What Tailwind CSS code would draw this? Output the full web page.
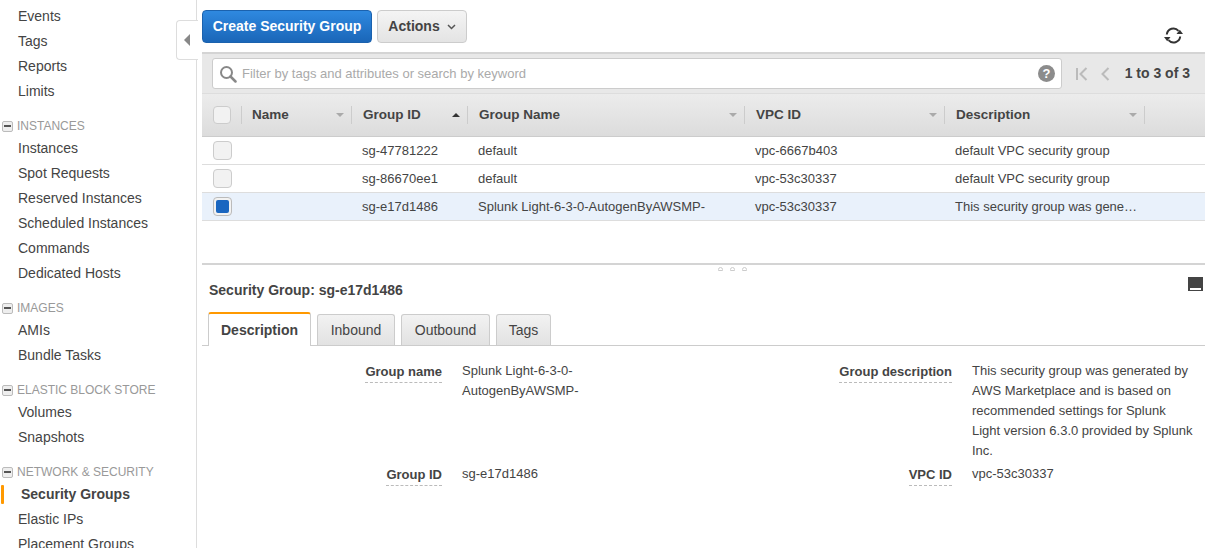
<!DOCTYPE html>
<html lang="en">
<head>
  <meta charset="UTF-8" />
  <title>Security Groups</title>
  <script src="https://cdn.jsdelivr.net/npm/@tailwindcss/browser@4"></script>
</head>
<body class="bg-white text-[#444] text-[13px] font-['Liberation_Sans',Arial,sans-serif] overflow-hidden">
<div class="relative flex h-[548px] w-[1205px] overflow-hidden">

  <!-- Sidebar -->
  <nav class="w-[197px] shrink-0 h-full border-r border-[#ddd] pt-[4px] text-[14px] overflow-hidden">
    <a class="flex items-center h-[25px] pl-[18px]">Events</a>
    <a class="flex items-center h-[25px] pl-[18px]">Tags</a>
    <a class="flex items-center h-[25px] pl-[18px]">Reports</a>
    <a class="flex items-center h-[25px] pl-[18px]">Limits</a>

    <div class="flex items-center h-[20px] mt-[12px] text-[12px] text-[#999]">
      <span class="ml-[2px] mr-[4px] w-[11px] h-[11px] flex items-center justify-center border border-[#bbb] rounded-[2px] bg-[#eee]"><span class="w-[7px] h-[2px] bg-[#555]"></span></span>INSTANCES
    </div>
    <a class="flex items-center h-[25px] pl-[18px]">Instances</a>
    <a class="flex items-center h-[25px] pl-[18px]">Spot Requests</a>
    <a class="flex items-center h-[25px] pl-[18px]">Reserved Instances</a>
    <a class="flex items-center h-[25px] pl-[18px]">Scheduled Instances</a>
    <a class="flex items-center h-[25px] pl-[18px]">Commands</a>
    <a class="flex items-center h-[25px] pl-[18px]">Dedicated Hosts</a>

    <div class="flex items-center h-[20px] mt-[12px] text-[12px] text-[#999]">
      <span class="ml-[2px] mr-[4px] w-[11px] h-[11px] flex items-center justify-center border border-[#bbb] rounded-[2px] bg-[#eee]"><span class="w-[7px] h-[2px] bg-[#555]"></span></span>IMAGES
    </div>
    <a class="flex items-center h-[25px] pl-[18px]">AMIs</a>
    <a class="flex items-center h-[25px] pl-[18px]">Bundle Tasks</a>

    <div class="flex items-center h-[20px] mt-[12px] text-[12px] text-[#999]">
      <span class="ml-[2px] mr-[4px] w-[11px] h-[11px] flex items-center justify-center border border-[#bbb] rounded-[2px] bg-[#eee]"><span class="w-[7px] h-[2px] bg-[#555]"></span></span>ELASTIC BLOCK STORE
    </div>
    <a class="flex items-center h-[25px] pl-[18px]">Volumes</a>
    <a class="flex items-center h-[25px] pl-[18px]">Snapshots</a>

    <div class="flex items-center h-[20px] mt-[12px] text-[12px] text-[#999]">
      <span class="ml-[2px] mr-[4px] w-[11px] h-[11px] flex items-center justify-center border border-[#bbb] rounded-[2px] bg-[#eee]"><span class="w-[7px] h-[2px] bg-[#555]"></span></span>NETWORK &amp; SECURITY
    </div>
    <a class="flex items-center h-[25px] pl-[1px] font-bold">
      <span class="w-[3px] h-[19px] bg-[#f90] rounded-[1px] mr-[17px]"></span>Security Groups
    </a>
    <a class="flex items-center h-[25px] pl-[18px]">Elastic IPs</a>
    <a class="flex items-center h-[25px] pl-[18px]">Placement Groups</a>
  </nav>

  <!-- Collapse tab -->
  <div class="absolute left-[176px] top-[20px] w-[22px] h-[40px] bg-white border border-r-0 border-[#ddd] rounded-l-[4px] flex items-center pl-[7px]">
    <span class="w-0 h-0 border-y-[6px] border-y-transparent border-r-[6px] border-r-[#888]"></span>
  </div>

  <!-- Main -->
  <main class="flex-1 min-w-0 pl-[5px] flex flex-col">
    <!-- Toolbar -->
    <div class="h-[52px] pt-[10px] flex items-start gap-[5px]">
      <button class="h-[33px] w-[170px] rounded-[4px] border border-[#1b62ae] bg-linear-to-b from-[#2f89e0] to-[#1a66b8] text-white font-bold text-[14px]">Create Security Group</button>
      <button class="h-[33px] w-[90px] rounded-[4px] border border-[#ccc] bg-linear-to-b from-[#f4f4f4] to-[#e4e4e4] font-bold text-[14px] flex items-center justify-center gap-[7px]">
        Actions
        <svg width="9" height="6" viewBox="0 0 9 6"><path d="M1 1l3.500 3.500L8 1" fill="none" stroke="#555" stroke-width="1.500"/></svg>
      </button>
      <svg class="ml-auto mr-[21px] mt-[16px]" width="21" height="19" viewBox="0 0 21 19" fill="none">
        <path d="M3.800 8.500A6.700 6.700 0 0 1 15.500 4.800" stroke="#333" stroke-width="2"/>
        <path d="M17.200 10.500A6.700 6.700 0 0 1 5.500 14.200" stroke="#333" stroke-width="2"/>
        <path d="M20 8h-6.500l3.300-4.200z" fill="#333"/>
        <path d="M1 11h6.500l-3.300 4.200z" fill="#333"/>
      </svg>
    </div>

    <!-- Filter bar -->
    <div class="h-[42px] -mt-[0px] border-t-2 border-[#d4d4d4] border-b border-b-[#ddd] bg-[#e8e8e8] flex items-center pl-[10px] pr-[15px]">
      <div class="w-[850px] h-[31px] bg-white border border-[#ccc] rounded-[3px] flex items-center pl-[6px] pr-[6px] gap-[5px]">
        <svg width="18" height="18" viewBox="0 0 18 18" fill="none">
          <circle cx="7.500" cy="7.500" r="5.500" stroke="#888" stroke-width="2"/>
          <path d="M11.500 11.500L16.500 16.500" stroke="#888" stroke-width="2.500" stroke-linecap="round"/>
        </svg>
        <span class="text-[#aaa] text-[13px]">Filter by tags and attributes or search by keyword</span>
        <span class="ml-auto w-[17px] h-[17px] rounded-full bg-[#8c8c8c] text-white text-[13px] font-bold flex items-center justify-center">?</span>
      </div>
      <svg class="ml-[13px]" width="13" height="14" viewBox="0 0 13 14" fill="none">
        <path d="M2 1v12" stroke="#bbb" stroke-width="2"/>
        <path d="M11.500 1L5.500 7l6 6" stroke="#bbb" stroke-width="2"/>
      </svg>
      <svg class="ml-[12px]" width="10" height="14" viewBox="0 0 10 14" fill="none">
        <path d="M8.500 1L2.500 7l6 6" stroke="#bbb" stroke-width="2"/>
      </svg>
      <span class="ml-auto font-bold text-[14px]">1 to 3 of 3</span>
    </div>

    <!-- Table header -->
    <div class="h-[43px] grid grid-cols-[40px_110px_116px_277px_200px_200px_1fr] items-center border-b border-[#ccc] bg-linear-to-b from-[#ececec] to-[#dcdcdc] font-bold text-[13.500px]">
      <div class="h-[18px] flex items-center justify-between border-r border-[#ccc] pl-[11px]">
        <span class="w-[18px] h-[18px] border border-[#ccc] rounded-[4px] bg-[#f2f2f2]"></span>
      </div>
      <div class="h-[18px] flex items-center justify-between border-r border-[#ccc] pl-[10px] pr-[7px]">Name
        <span class="w-0 h-0 border-x-[4px] border-x-transparent border-t-[4px] border-t-[#aaa]"></span>
      </div>
      <div class="h-[18px] flex items-center justify-between border-r border-[#ccc] pl-[11px] pr-[7px]">Group ID
        <span class="w-0 h-0 border-x-[4px] border-x-transparent border-b-[4px] border-b-[#333]"></span>
      </div>
      <div class="h-[18px] flex items-center justify-between border-r border-[#ccc] pl-[11px] pr-[7px]">Group Name
        <span class="w-0 h-0 border-x-[4px] border-x-transparent border-t-[4px] border-t-[#aaa]"></span>
      </div>
      <div class="h-[18px] flex items-center justify-between border-r border-[#ccc] pl-[11px] pr-[7px]">VPC ID
        <span class="w-0 h-0 border-x-[4px] border-x-transparent border-t-[4px] border-t-[#aaa]"></span>
      </div>
      <div class="h-[18px] flex items-center justify-between border-r border-[#ccc] pl-[11px] pr-[7px]">Description
        <span class="w-0 h-0 border-x-[4px] border-x-transparent border-t-[4px] border-t-[#aaa]"></span>
      </div>
      <div></div>
    </div>

    <!-- Rows -->
    <div class="h-[28px] grid grid-cols-[40px_110px_116px_277px_200px_200px_1fr] items-center border-b border-[#ddd]">
      <div class="pl-[11px]"><span class="block w-[19px] h-[19px] border border-[#ccc] rounded-[4px] bg-[#f2f2f2]"></span></div>
      <div></div>
      <div class="pl-[10px]">sg-47781222</div>
      <div class="pl-[10px]">default</div>
      <div class="pl-[10px]">vpc-6667b403</div>
      <div class="pl-[10px]">default VPC security group</div>
      <div></div>
    </div>
    <div class="h-[28px] grid grid-cols-[40px_110px_116px_277px_200px_200px_1fr] items-center border-b border-[#ddd]">
      <div class="pl-[11px]"><span class="block w-[19px] h-[19px] border border-[#ccc] rounded-[4px] bg-[#f2f2f2]"></span></div>
      <div></div>
      <div class="pl-[10px]">sg-86670ee1</div>
      <div class="pl-[10px]">default</div>
      <div class="pl-[10px]">vpc-53c30337</div>
      <div class="pl-[10px]">default VPC security group</div>
      <div></div>
    </div>
    <div class="h-[28px] grid grid-cols-[40px_110px_116px_277px_200px_200px_1fr] items-center border-b border-[#ddd] bg-[#e9f1fb]">
      <div class="pl-[11px]"><span class="flex items-center justify-center w-[19px] h-[19px] border border-[#bbb] rounded-[4px] bg-[#f2f2f2]"><span class="w-[13px] h-[13px] rounded-[2px] bg-[#1a66c0]"></span></span></div>
      <div></div>
      <div class="pl-[10px]">sg-e17d1486</div>
      <div class="pl-[10px]">Splunk Light-6-3-0-AutogenByAWSMP-</div>
      <div class="pl-[10px]">vpc-53c30337</div>
      <div class="pl-[10px] pr-[6px] truncate">This security group was generated by AWS</div>
      <div></div>
    </div>

    <!-- Splitter -->
    <div class="relative mt-[42px] border-t-2 border-[#d4d4d4] h-[40px] flex items-end">
      <div class="absolute left-[516px] top-[2px] flex gap-[7px]">
        <span class="w-[5px] h-[4px] rounded-t-full border border-[#ccc]"></span>
        <span class="w-[5px] h-[4px] rounded-t-full border border-[#ccc]"></span>
        <span class="w-[5px] h-[4px] rounded-t-full border border-[#ccc]"></span>
      </div>
      <h2 class="ml-[7px] mb-[3px] font-bold text-[14px] leading-[20px]">Security Group: sg-e17d1486</h2>
      <span class="absolute right-[2px] top-[12px] w-[15px] h-[14px] bg-[#444] flex items-end justify-center pb-[1px]"><span class="w-[11px] h-[2px] bg-white"></span></span>
    </div>

    <!-- Tabs -->
    <div class="mt-[9px] h-[34px] flex items-end border-b border-[#ccc] pl-[6px] text-[14px]">
      <div class="h-[34px] w-[103px] -mb-[1px] bg-white border-x border-[#ccc] border-t-2 border-t-[#f90] rounded-t-[3px] font-bold flex items-center justify-center">Description</div>
      <div class="h-[31px] w-[78px] ml-[6px] bg-linear-to-b from-[#f2f2f2] to-[#e2e2e2] border border-b-0 border-[#ccc] rounded-t-[3px] flex items-center justify-center">Inbound</div>
      <div class="h-[31px] w-[89px] ml-[6px] bg-linear-to-b from-[#f2f2f2] to-[#e2e2e2] border border-b-0 border-[#ccc] rounded-t-[3px] flex items-center justify-center">Outbound</div>
      <div class="h-[31px] w-[55px] ml-[6px] bg-linear-to-b from-[#f2f2f2] to-[#e2e2e2] border border-b-0 border-[#ccc] rounded-t-[3px] flex items-center justify-center">Tags</div>
    </div>

    <!-- Details -->
    <div class="mt-[15px] grid grid-cols-[240px_250px_220px_1fr] gap-x-[20px] leading-[20px]">
      <div class="text-right pt-[1px]"><span class="inline-block font-bold border-b border-dashed border-[#bbb]">Group name</span></div>
      <div>Splunk Light-6-3-0-<br>AutogenByAWSMP-</div>
      <div class="text-right pt-[1px]"><span class="inline-block font-bold border-b border-dashed border-[#bbb]">Group description</span></div>
      <div class="pr-[10px]">This security group was generated by AWS Marketplace and is based on recommended settings for Splunk Light version 6.3.0 provided by Splunk Inc.</div>

      <div class="text-right mt-[3px] pt-[1px]"><span class="inline-block font-bold border-b border-dashed border-[#bbb]">Group ID</span></div>
      <div class="mt-[3px]">sg-e17d1486</div>
      <div class="text-right mt-[3px] pt-[1px]"><span class="inline-block font-bold border-b border-dashed border-[#bbb]">VPC ID</span></div>
      <div class="mt-[3px]">vpc-53c30337</div>
    </div>
  </main>
</div>
</body>
</html>
